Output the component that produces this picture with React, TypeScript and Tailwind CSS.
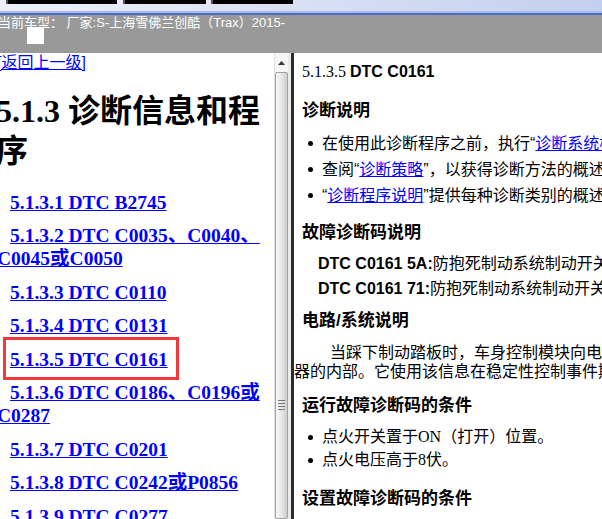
import React from 'react';

const serif = "font-['Liberation_Serif','Noto_Sans_CJK_SC',serif]";
const sans = "font-['Liberation_Sans','Noto_Sans_CJK_SC',sans-serif]";

const links = [
  '5.1.3.1 DTC B2745',
  '5.1.3.2 DTC C0035、C0040、C0045或C0050',
  '5.1.3.3 DTC C0110',
  '5.1.3.4 DTC C0131',
  '5.1.3.5 DTC C0161',
  '5.1.3.6 DTC C0186、C0196或C0287',
  '5.1.3.7 DTC C0201',
  '5.1.3.8 DTC C0242或P0856',
  '5.1.3.9 DTC C0277',
];

const Bullet = ({ children }: { children: React.ReactNode }) => (
  <li className="flex items-center pl-[14px]">
    <span className="w-[5px] h-[5px] rounded-full bg-black shrink-0" />
    <span className="ml-[9px]">{children}</span>
  </li>
);

const App = () => {
  return (
    <div className={`w-[602px] h-[519px] overflow-hidden bg-white flex flex-col ${sans}`}>
      {/* top strip */}
      <div className="h-[11px] bg-linear-to-r from-[#eef1fb] to-[#c3cfee] flex items-start pl-[6px] gap-[5px]">
        <div className="w-[111px] h-[4px] bg-black border-l-2 border-[#555]" />
        <div className="w-[83px] h-[4px] bg-black border-l-2 border-[#555] ml-[1px]" />
        <div className="w-[82px] h-[4px] bg-black border-l-2 border-[#555]" />
      </div>
      <div className="h-[2px] bg-[#a9bbe8]" />
      <div className="h-[2px] bg-[#4a6dc6]" />

      {/* current model bar */}
      <div className="h-[38px] bg-[#999999] relative overflow-hidden">
        <div className="ml-[-2px] text-[13px] leading-[16px] text-white whitespace-nowrap">
          当前车型： 厂家:S-上海雪佛兰创酷（Trax）2015-
        </div>
        <div className="absolute left-[27px] top-[12px] w-[17px] h-[17px] bg-white" />
      </div>

      <div className="flex h-[466px]">
        {/* left pane */}
        <div className={`w-[274px] overflow-hidden bg-white ${serif}`}>
          <div className="ml-[-3px]">
            <a className={`block text-[16px] leading-[20px] text-[#0000ff] underline whitespace-nowrap ${sans}`}>
              [返回上一级]
            </a>
            <h1 className="mt-[18px] ml-[-1px] text-[32px] leading-[40px] font-bold text-black">
              5.1.3 诊断信息和程序
            </h1>
            <div className="mt-[19.5px]">
              {links.map((t, i) => (
                <p
                  key={i}
                  className="relative text-[19.5px] leading-[23px] font-bold indent-[13px] mb-[10.5px]"
                >
                  <a className="text-[#0000ff] underline">{t}</a>
                  {i === 4 && (
                    <span className="absolute left-[6px] top-[-10.5px] w-[176px] h-[43px] border-[3px] border-[#f0393b]" />
                  )}
                </p>
              ))}
            </div>
          </div>
        </div>

        {/* scrollbar */}
        <div className="w-[17px] flex flex-col border-l border-[#e0e0e0] bg-[#ebebeb]">
          <div className="h-[19px] flex items-center justify-center bg-[#f6f6f6] mr-[3px]">
            <svg width="7" height="4" viewBox="0 0 7 4">
              <path d="M0 4 L3.5 0 L7 4 Z" fill="#333" />
            </svg>
          </div>
          <div className="flex-1 mr-[3px] border border-[#a3a3a3] rounded-[2px] bg-linear-to-r from-[#f7f7f7] via-[#e8e8e8] to-[#cdcdcd] flex flex-col items-center">
            <div className="mt-[327px] flex flex-col gap-[2px]">
              <div className="w-[7px] h-[1px] bg-[#777]" />
              <div className="w-[7px] h-[1px] bg-[#777]" />
              <div className="w-[7px] h-[1px] bg-[#777]" />
              <div className="w-[7px] h-[1px] bg-[#777]" />
            </div>
          </div>
        </div>
        <div className="w-[3px] bg-[#2b2b2b]" />

        {/* right pane */}
        <div className="flex-1 overflow-hidden bg-white whitespace-nowrap text-black text-[16px]">
          <div className="pt-[9px] pl-[8px] leading-[20px]">
            <span className={serif}>5.1.3.5 </span>
            <span className="font-bold">DTC C0161</span>
          </div>

          <div className="mt-[18px] pl-[8px] leading-[22px] text-[17px] font-bold">诊断说明</div>
          <ul className="mt-[8.5px] leading-[26px]">
            <Bullet>
              在使用此诊断程序之前，执行“<a className="text-[#0000ff] underline">诊断系统检查</a>”。
            </Bullet>
            <Bullet>
              查阅“<a className="text-[#0000ff] underline">诊断策略</a>”，以获得诊断方法的概述。
            </Bullet>
            <Bullet>
              “<a className="text-[#0000ff] underline">诊断程序说明</a>”提供每种诊断类别的概述。
            </Bullet>
          </ul>

          <div className="mt-[13px] pl-[8px] leading-[22px] text-[17px] font-bold">故障诊断码说明</div>
          <div className="mt-[7px] pl-[24px] leading-[25px]">
            <div>
              <span className="font-bold">DTC C0161 5A:</span>防抱死制动系统制动开关电路信号无效
            </div>
            <div>
              <span className="font-bold">DTC C0161 71:</span>防抱死制动系统制动开关电路信号不稳定
            </div>
          </div>

          <div className="mt-[9.5px] pl-[8px] leading-[22px] text-[17px] font-bold">电路/系统说明</div>
          <p className="mt-[10.75px] leading-[19.5px] indent-[36px]">
            当踩下制动踏板时，车身控制模块向电子制动控制模块发送信号。制动踏板位置传感
            <br />
            器的内部。它使用该信息在稳定性控制事件期间确定制动状态。
          </p>

          <div className="mt-[13.25px] pl-[8px] leading-[22px] text-[17px] font-bold">运行故障诊断码的条件</div>
          <ul className="mt-[9.25px] leading-[22.5px]">
            <Bullet>
              点火开关置于<span className={serif}>ON</span>（打开）位置。
            </Bullet>
            <Bullet>
              点火电压高于<span className={serif}>8</span>伏。
            </Bullet>
          </ul>

          <div className="mt-[16.75px] pl-[8px] leading-[22px] text-[17px] font-bold">设置故障诊断码的条件</div>
        </div>
      </div>
    </div>
  );
};

export default App;
